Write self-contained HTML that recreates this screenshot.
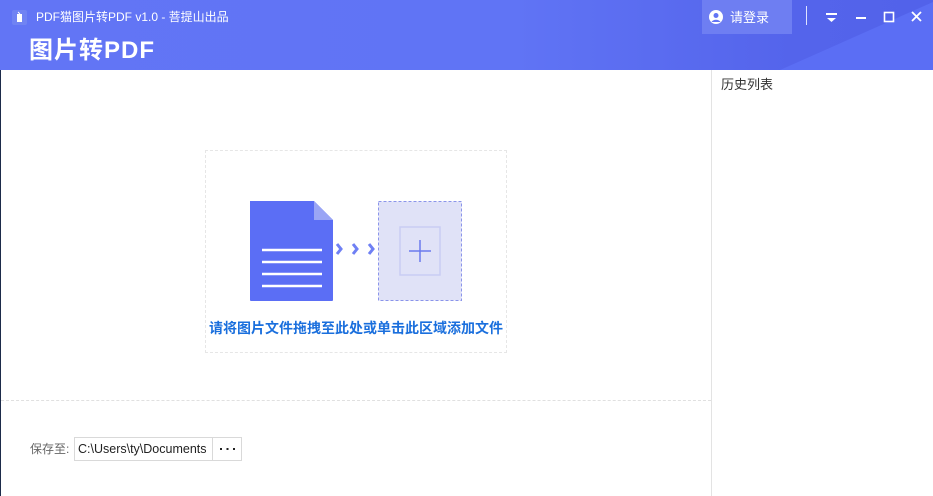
<!DOCTYPE html>
<html><head><meta charset="utf-8"><style>
*{margin:0;padding:0;box-sizing:border-box}
body{width:933px;height:496px;overflow:hidden;background:#fff;font-family:"Liberation Sans","Noto Sans CJK SC",sans-serif;position:relative}
.hdr{position:absolute;left:0;top:0;width:933px;height:70px;background:linear-gradient(90deg,#6275f5 0%,#6074f5 55%,#5464eb 85%,#5262ea 100%);overflow:hidden}
.t{position:absolute;color:#fff}
.bigt{position:absolute;left:29px;top:36px;color:#fff;font-size:24px;font-weight:bold;line-height:30px;letter-spacing:1px}
</style></head><body>
<div class="hdr">
<svg style="position:absolute;left:0;top:0" width="933" height="70"><polygon points="933,2 780,70 933,70" fill="#5b6ef4"/></svg>
<div style="position:absolute;left:12px;top:10px;width:15px;height:15px;background:#7083f3;border-radius:2px"></div>
<svg style="position:absolute;left:13px;top:11px" width="13" height="13"><path d="M4 3h5v8H4z" fill="#fff"/><path d="M5 1l2 2" stroke="#fff"/></svg>
<div class="t" style="left:36px;top:9px;font-size:12px;line-height:16px">PDF猫图片转PDF v1.0 - 菩提山出品</div>
<div class="bigt">图片转PDF</div>
<div style="position:absolute;left:702px;top:0;width:90px;height:34px;background:#6e7ef2"></div>
<svg style="position:absolute;left:709px;top:10px" width="14" height="14"><circle cx="7" cy="7" r="7" fill="#fff"/><circle cx="7" cy="5.5" r="2.5" fill="#6274f5"/><path d="M2.5 12a5 4 0 0 1 9 0" fill="#6274f5"/></svg>
<div class="t" style="left:730px;top:10px;font-size:13px;line-height:16px">请登录</div>
<div style="position:absolute;left:806px;top:6px;width:1px;height:19px;background:#dfe3ff"></div>
<svg style="position:absolute;left:820px;top:8px" width="110" height="20"><rect x="6" y="5" width="11" height="2" fill="#fff"/><path d="M7 10h9l-4.5 4z" fill="#fff"/><rect x="36" y="9" width="10" height="2" fill="#fff"/><rect x="64.5" y="4.5" width="9" height="9" fill="none" stroke="#fff" stroke-width="1.6"/><path d="M92 4l9 9M101 4l-9 9" stroke="#fff" stroke-width="1.8"/></svg>
</div>
<div style="position:absolute;left:0;top:70px;width:1px;height:426px;background:#1d2b4a"></div>
<div style="position:absolute;left:711px;top:70px;width:1px;height:426px;background:#e3e3e3"></div>
<div style="position:absolute;left:721px;top:77px;font-size:13px;line-height:16px;color:#333">历史列表</div>
<div style="position:absolute;left:205px;top:150px;width:302px;height:203px;border:1px dashed #e6e6e6"></div>
<svg style="position:absolute;left:248px;top:199px" width="220" height="106">
<path d="M2 2h64l19 19v80a1 1 0 0 1-1 1H3a1 1 0 0 1-1-1z" fill="#5b6ef5"/>
<path d="M66 2v19h19z" fill="#9aa5f5"/>
<g stroke="#fff" stroke-width="2.5"><path d="M14 51h60M14 63h60M14 75h60M14 87h60"/></g>
<g stroke="#6f80f4" stroke-width="3" fill="none"><path d="M89 45l4 5-4 5M105 45l4 5-4 5M121 45l4 5-4 5"/></g>
<rect x="130.5" y="2.5" width="83" height="99" fill="#e0e2f7" stroke="#8a94ea" stroke-dasharray="3 2"/>
<rect x="152" y="28" width="40" height="48" fill="none" stroke="#c9cdf4" stroke-width="1.5"/>
<path d="M161 52h22M172 41v22" stroke="#6a7aee" stroke-width="1.5"/>
</svg>
<div style="position:absolute;left:200px;top:320px;width:312px;text-align:center;font-size:14px;font-weight:bold;color:#1a6fdd;line-height:17px;white-space:nowrap">请将图片文件拖拽至此处或单击此区域添加文件</div>
<div style="position:absolute;left:1px;top:400px;width:710px;border-top:1px dashed #e0e0e0"></div>
<div style="position:absolute;left:30px;top:442px;font-size:12px;color:#666;line-height:15px">保存至:</div>
<div style="position:absolute;left:74px;top:437px;width:168px;height:24px;border:1px solid #d9d9d9"></div>
<div style="position:absolute;left:212px;top:437px;width:1px;height:24px;background:#d9d9d9"></div>
<div style="position:absolute;left:78px;top:441px;width:133px;overflow:hidden;white-space:nowrap;font-size:12.5px;color:#222;line-height:16px">C:\Users\ty\Documents</div>
<svg style="position:absolute;left:213px;top:437px" width="29" height="24"><g fill="#222"><rect x="7" y="11" width="2" height="2"/><rect x="13.5" y="11" width="2" height="2"/><rect x="20" y="11" width="2" height="2"/></g></svg>
</body></html>
